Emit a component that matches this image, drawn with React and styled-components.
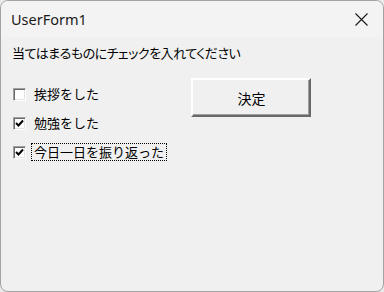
import styled, { createGlobalStyle } from "styled-components";

const Global = createGlobalStyle`
	html, body {
		margin: 0;
		padding: 0;
		background: #e9e9e9;
	}
	* { box-sizing: border-box; }
`

const items = [
	{ label: "挨拶をした", checked: false, focus: false },
	{ label: "勉強をした", checked: true, focus: false },
	{ label: "今日一日を振り返った", checked: true, focus: true },
]

const CheckMark = () => (
	<svg width="9" height="9" viewBox="0 0 9 9">
		<path d="M1 4 L3.5 6.5 L8 1.5" fill="none" stroke="#000" strokeWidth="2" />
	</svg>
)

const App = () => {
	return (
		<>
			<Global />
			<Window>
				<TitleBar>
					<Title>UserForm1</Title>
					<CloseBtn>
						<svg width="13" height="13" viewBox="0 0 13 13">
							<path d="M0.5 0.5 L12.5 12.5 M12.5 0.5 L0.5 12.5" stroke="#1a1a1a" strokeWidth="1.1" />
						</svg>
					</CloseBtn>
				</TitleBar>
				<Client>
					<Prompt>当てはまるものにチェックを入れてください</Prompt>
					<Row>
						<Checks>
							{items.map((it) => (
								<CheckRow key={it.label}>
									<Box>{it.checked && <CheckMark />}</Box>
									<CheckLabel $focus={it.focus}>{it.label}</CheckLabel>
								</CheckRow>
							))}
						</Checks>
						<Button>決定</Button>
					</Row>
				</Client>
			</Window>
		</>
	)
}

const Window = styled.div`
	width: 384px;
	height: 292px;
	border: 1px solid #a3a3a3;
	border-radius: 8px;
	overflow: hidden;
	background: #f0f0f0;
	display: flex;
	flex-direction: column;
`

const TitleBar = styled.div`
	height: 36px;
	background: #f3f3f3;
	display: flex;
	align-items: center;
	justify-content: space-between;
	padding: 0 15px 0 10px;
`

const Title = styled.div`
	font-family: "Segoe UI", "Noto Sans", sans-serif;
	font-size: 14.5px;
	color: #1a1a1a;
`

const CloseBtn = styled.div`
	display: flex;
	align-items: center;
`

const Client = styled.div`
	flex: 1;
	padding: 7px 0 0 11px;
	font-family: "Noto Sans CJK JP", sans-serif;
	color: #000;
`

const Prompt = styled.div`
	font-size: 13px;
	line-height: 18px;
	letter-spacing: -0.5px;
	font-feature-settings: "palt";
`

const Row = styled.div`
	display: grid;
	grid-template-columns: 179px 120px;
	margin-top: 16px;
`

const Checks = styled.div`
	display: flex;
	flex-direction: column;
	gap: 11px;
	padding-top: 7px;
	padding-left: 1px;
`

const CheckRow = styled.div`
	display: flex;
	align-items: center;
	height: 18px;
`

const Box = styled.div`
	width: 13px;
	height: 13px;
	margin-right: 5px;
	background: #fff;
	border-top: 1px solid #a0a0a0;
	border-left: 1px solid #a0a0a0;
	border-right: 1px solid #fff;
	border-bottom: 1px solid #fff;
	box-shadow: inset 1px 1px 0 #696969, inset -1px -1px 0 #e3e3e3;
	display: flex;
	align-items: center;
	justify-content: center;
`

const CheckLabel = styled.span`
	font-size: 13px;
	line-height: 16px;
	padding: 0 2px;
	border: 1px dotted ${(p) => (p.$focus ? "#000" : "transparent")};
`

const Button = styled.div`
	height: 39px;
	background: #f0f0f0;
	border-top: 2px solid #fff;
	border-left: 2px solid #fff;
	border-right: 2px solid #696969;
	border-bottom: 2px solid #696969;
	box-shadow: inset -1px -1px 0 #a0a0a0;
	display: flex;
	align-items: center;
	justify-content: center;
	font-size: 14px;
	padding-left: 1px;
`

export default App;
